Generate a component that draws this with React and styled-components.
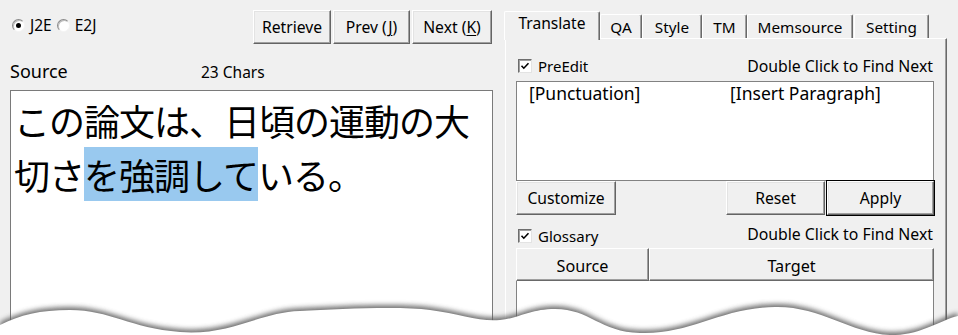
import React from 'react';
import styled, { createGlobalStyle } from 'styled-components';

const Global = createGlobalStyle`
  html, body { margin: 0; padding: 0; background: #f0f0f0; }
  body { font-family: "Noto Sans", "Noto Sans CJK JP", sans-serif; color: #000; }
  * { box-sizing: border-box; }
`;

const Window = styled.div`
  position: relative;
  width: 958px;
  height: 335px;
  overflow: hidden;
  background: #f0f0f0;
  display: flex;
`;

/* ---------- left pane ---------- */
const LeftPane = styled.div`
  width: 483px;
  margin-left: 10px;
  display: flex;
  flex-direction: column;
`;

const TopRow = styled.div`
  height: 44px;
  padding-top: 10px;
  display: flex;
  justify-content: space-between;
  align-items: flex-start;
`;

const RadioGroup = styled.div`
  display: flex;
  align-items: center;
  height: 20px;
  margin-top: 5px;
  margin-left: 2px;
  font-size: 15.5px;
`;

const RadioLabel = styled.label`
  display: flex;
  align-items: center;
  gap: 5px;
  margin-right: 5px;
`;

const RadioCircle = styled.span`
  width: 13px;
  height: 13px;
  border-radius: 50%;
  background: #fff;
  border: 1px solid;
  border-color: #8a8a8a #f4f4f4 #f4f4f4 #8a8a8a;
  box-shadow: inset 1px 1px 0 #bdbdbd;
  display: flex;
  align-items: center;
  justify-content: center;
  &::after {
    content: '';
    width: 5px;
    height: 5px;
    border-radius: 50%;
    background: ${p => (p.$on ? '#000' : 'transparent')};
  }
`;

const ButtonGroup = styled.div`
  display: flex;
  gap: 2px;
  margin-right: 1px;
`;

const Button = styled.button`
  width: ${p => p.$w}px;
  height: 34px;
  padding: 0;
  margin-left: ${p => p.$ml || 0}px;
  font-family: inherit;
  font-size: 15.7px;
  color: #000;
  background: #f0f0f0;
  border: 1px solid;
  border-color: #fff #646464 #646464 #fff;
  box-shadow: ${p =>
    p.$default
      ? '0 0 0 1px #000, inset -1px -1px 0 #a0a0a0, inset 1px 1px 0 #e3e3e3'
      : 'inset -1px -1px 0 #a0a0a0, inset 1px 1px 0 #e3e3e3'};
  u { text-decoration: underline; text-underline-offset: 2px; }
`;

const LabelRow = styled.div`
  height: 46px;
  padding-top: 17px;
  display: grid;
  grid-template-columns: 191px auto;
  align-items: baseline;
  line-height: 20px;
`;

const SourceLabel = styled.span`
  font-size: 18px;
`;

const CharCount = styled.span`
  font-size: 15.5px;
`;

const TextBox = styled.div`
  flex: 1;
  background: #fff;
  border: 1px solid #7a7a7a;
  padding: 2px 0 0 3px;
  font-family: "Noto Sans CJK JP", sans-serif;
  font-size: 36px;
  letter-spacing: -1px;
  line-height: 54px;
  color: #000;
`;

const Selected = styled.span`
  background: #99c9ef;
  padding: 1px 0;
`;

/* ---------- right pane ---------- */
const RightPane = styled.div`
  width: 442px;
  margin-left: 12px;
  display: flex;
  flex-direction: column;
`;

const TabStrip = styled.div`
  height: 38px;
  display: flex;
  align-items: flex-end;
`;

const Tab = styled.div`
  position: relative;
  z-index: ${p => (p.$active ? 2 : 1)};
  width: ${p => p.$w}px;
  height: ${p => (p.$active ? 29 : 24)}px;
  margin-bottom: ${p => (p.$active ? -2 : 0)}px;
  margin-left: ${p => p.$ml || 0}px;
  padding-top: ${p => (p.$active ? 2 : 3)}px;
  background: #f0f0f0;
  border-top: 1px solid #fff;
  border-left: 1px solid #fff;
  border-right: 1px solid #696969;
  box-shadow: inset -1px 0 0 #a0a0a0;
  border-radius: 2px 2px 0 0;
  font-size: ${p => (p.$active ? 15.6 : 15.3)}px;
  line-height: 18px;
  text-align: center;
`;

const TabPanel = styled.div`
  flex: 1;
  display: flex;
  flex-direction: column;
  background: #f0f0f0;
  border-top: 1px solid #fff;
  border-left: 1px solid #fff;
  border-right: 1px solid #696969;
  box-shadow: inset -1px 0 0 #a0a0a0;
  padding: 0 12px 0 10px;
`;

const CheckRow = styled.div`
  height: ${p => p.$h}px;
  margin-top: ${p => p.$mt}px;
  display: flex;
  align-items: center;
  justify-content: space-between;
  padding-left: 2px;
  padding-right: 1px;
`;

const CheckLabel = styled.label`
  display: flex;
  align-items: center;
  gap: 6px;
  font-size: 15px;
`;

const CheckBox = styled.span`
  width: 14px;
  height: 14px;
  background: #fff;
  border: 1px solid;
  border-color: #6d6d6d #e3e3e3 #e3e3e3 #6d6d6d;
  box-shadow: inset 1px 1px 0 #a0a0a0;
  display: flex;
  align-items: center;
  justify-content: center;
`;

const Hint = styled.span`
  font-size: 15.8px;
  margin-top: ${p => (p.$up ? -3 : 0)}px;
`;

const ListBox = styled.div`
  height: 100px;
  margin-top: 5px;
  background: #fff;
  border: 1px solid #828282;
  padding: 1px 0 0 12px;
  display: grid;
  grid-template-columns: 201px 1fr;
  align-content: start;
  font-size: 17.5px;
  line-height: 20px;
`;

const ButtonRow = styled.div`
  display: flex;
  align-items: flex-start;
`;

const Spacer = styled.div`
  flex: 1;
`;

const GridHeader = styled.div`
  margin-top: 2px;
  height: 33px;
  display: grid;
  grid-template-columns: 133px 1fr;
`;

const HeaderCell = styled.div`
  background: #f0f0f0;
  border: 1px solid;
  border-color: #fff #696969 #696969 #fff;
  box-shadow: inset -1px -1px 0 #a0a0a0;
  display: flex;
  align-items: center;
  justify-content: center;
  padding-top: 2px;
  font-size: 16.2px;
`;

const GridBody = styled.div`
  flex: 1;
  background: #fff;
  border-left: 1px solid #828282;
  border-right: 1px solid #828282;
`;

/* ---------- torn edge ---------- */
const TornEdge = styled.svg`
  position: absolute;
  left: 0;
  bottom: 0;
  width: 958px;
  height: 45px;
  pointer-events: none;
`;

const WAVE =
  'M0,35 C20,25 40,20 70,20 C110,20 130,38 180,42 C230,46 260,22 300,21 ' +
  'C340,19 400,16 430,20 C460,24 480,32 500,30 C520,28 530,19 555,19 ' +
  'C590,19 600,42 640,43 C690,45 720,18 775,17 C820,16 850,43 890,45 ' +
  'C920,46 940,30 958,26 L958,60 L0,60 Z';

const Check = () => (
  <svg width="10" height="10" viewBox="0 0 10 10">
    <path d="M1.5 4.8 L3.8 7.2 L8.5 2.2" fill="none" stroke="#000" strokeWidth="1.6" />
  </svg>
);

export default function App() {
  return (
    <>
      <Global />
      <Window>
        <LeftPane>
          <TopRow>
            <RadioGroup>
              <RadioLabel>
                <RadioCircle $on />
                J2E
              </RadioLabel>
              <RadioLabel>
                <RadioCircle />
                E2J
              </RadioLabel>
            </RadioGroup>
            <ButtonGroup>
              <Button $w={78}>Retrieve</Button>
              <Button $w={77}>Prev (<u>J</u>)</Button>
              <Button $w={80}>Next (<u>K</u>)</Button>
            </ButtonGroup>
          </TopRow>
          <LabelRow>
            <SourceLabel>Source</SourceLabel>
            <CharCount>23 Chars</CharCount>
          </LabelRow>
          <TextBox>
            この論文は、日頃の運動の大切さ<Selected>を強調して</Selected>いる。
          </TextBox>
        </LeftPane>

        <RightPane>
          <TabStrip>
            <Tab $active $w={96} $ml={-1}>Translate</Tab>
            <Tab $w={42}>QA</Tab>
            <Tab $w={60}>Style</Tab>
            <Tab $w={45}>TM</Tab>
            <Tab $w={106}>Memsource</Tab>
            <Tab $w={75} $ml={1}>Setting</Tab>
          </TabStrip>
          <TabPanel>
            <CheckRow $h={20} $mt={17}>
              <CheckLabel>
                <CheckBox><Check /></CheckBox>
                PreEdit
              </CheckLabel>
              <Hint>Double Click to Find Next</Hint>
            </CheckRow>
            <ListBox>
              <span>[Punctuation]</span>
              <span>[Insert Paragraph]</span>
            </ListBox>
            <ButtonRow>
              <Button $w={100}>Customize</Button>
              <Spacer />
              <Button $w={99}>Reset</Button>
              <Button $w={107} $ml={2} $default>Apply</Button>
            </ButtonRow>
            <CheckRow $h={21} $mt={10}>
              <CheckLabel>
                <CheckBox><Check /></CheckBox>
                Glossary
              </CheckLabel>
              <Hint $up>Double Click to Find Next</Hint>
            </CheckRow>
            <GridHeader>
              <HeaderCell>Source</HeaderCell>
              <HeaderCell>Target</HeaderCell>
            </GridHeader>
            <GridBody />
          </TabPanel>
        </RightPane>

        <TornEdge viewBox="0 0 958 45" preserveAspectRatio="none">
          <defs>
            <filter id="tornShadow" x="-5%" y="-100%" width="110%" height="300%">
              <feGaussianBlur stdDeviation="2.6" />
            </filter>
          </defs>
          <path d={WAVE} fill="#5a5a5a" opacity="0.85" transform="translate(0,-3)" filter="url(#tornShadow)" />
          <path d={WAVE} fill="#fff" />
        </TornEdge>
      </Window>
    </>
  );
}
